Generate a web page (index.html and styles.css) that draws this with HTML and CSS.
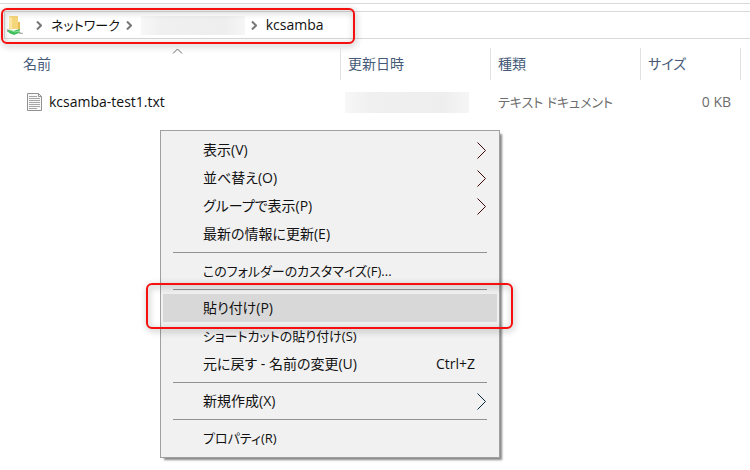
FILE: index.html
```html
<!DOCTYPE html>
<html lang="ja">
<head>
  <meta charset="UTF-8">
  <title>kcsamba</title>
  <link rel="stylesheet" href="styles.css">
</head>
<body>

  <header class="toolbar">
    <nav class="address">
      <svg class="folder" width="16" height="20" viewBox="0 0 16 20">
        <path d="M2 1h9v13H2z" fill="#f6d67a"/>
        <path d="M2 1l3 2v12l-3-2z" fill="#fbe7a6"/>
        <path d="M11 7h2v8h-2z" fill="#e8bd55"/>
        <path d="M0 14l3 1v2H0zM12 17l4 1v1h-4z" fill="#a9b3ac"/>
        <path d="M1 15l5 1 7-2-1 4-5 2-5-2z" fill="#3fbf5a"/>
        <path d="M3 15l5 2 4-1" fill="none" stroke="#8be39a"/>
      </svg>
      <svg class="crumb-arrow" width="6" height="9" viewBox="0 0 6 9"><path d="M1 .5l4 4-4 4"/></svg>
      <a class="crumb kana" href="#">ネットワーク</a>
      <svg class="crumb-arrow" width="6" height="9" viewBox="0 0 6 9"><path d="M1 .5l4 4-4 4"/></svg>
      <span class="blurred blurred-host"></span>
      <svg class="crumb-arrow" width="6" height="9" viewBox="0 0 6 9"><path d="M1 .5l4 4-4 4"/></svg>
      <a class="crumb" href="#">kcsamba</a>
      <span class="marker address-marker"></span>
    </nav>
  </header>

  <table class="files">
    <thead>
      <tr>
        <th class="col-name">名前
          <svg class="sort" width="11" height="6" viewBox="0 0 11 6"><path d="M1 5.500l4.500-4.500 4.500 4.500"/></svg>
        </th>
        <th class="col-date">更新日時</th>
        <th class="col-type">種類</th>
        <th class="col-size">サイズ</th>
        <th class="col-rest"></th>
      </tr>
    </thead>
    <tbody>
      <tr>
        <td>
          <div class="file">
            <svg width="15" height="18" viewBox="0 0 15 18">
              <path d="M.5.5h11l3 3v14H.5z" fill="#f7f7f7" stroke="#929292"/>
              <path d="M11.500.5v3h3" fill="none" stroke="#929292"/>
              <path d="M2 3.500h8M2 5.500h11M2 7.500h11M2 9.500h11M2 11.500h11M2 13.500h11M2 15.500h8" stroke="#a5a5a5"/>
            </svg>
            <span>kcsamba-test1.txt</span>
          </div>
        </td>
        <td class="date"><span class="blurred blurred-date"></span></td>
        <td class="muted kana">テキスト ドキュメント</td>
        <td class="muted size">0 KB</td>
        <td></td>
      </tr>
    </tbody>
  </table>

  <div class="menu">
    <button class="item">表示(V)<svg class="more" width="10" height="17" viewBox="0 0 10 17"><path d="M.5.5l8 8-8 8"/></svg></button>
    <button class="item">並べ替え(O)<svg class="more" width="10" height="17" viewBox="0 0 10 17"><path d="M.5.5l8 8-8 8"/></svg></button>
    <button class="item">グループで表示(P)<svg class="more" width="10" height="17" viewBox="0 0 10 17"><path d="M.5.5l8 8-8 8"/></svg></button>
    <button class="item">最新の情報に更新(E)</button>
    <hr>
    <button class="item kana">このフォルダーのカスタマイズ(F)...</button>
    <hr>
    <button class="item active">貼り付け(P)<span class="marker paste-marker"></span></button>
    <button class="item kana">ショートカットの貼り付け(S)</button>
    <button class="item">元に戻す - 名前の変更(U)<span class="shortcut">Ctrl+Z</span></button>
    <hr>
    <button class="item">新規作成(X)<svg class="more more-new" width="10" height="17" viewBox="0 0 10 17"><path d="M.5.5l8 8-8 8"/></svg></button>
    <hr>
    <button class="item kana">プロパティ(R)</button>
  </div>

</body>
</html>
```
FILE: styles.css
```css
* {
  box-sizing: border-box;
}

body {
  margin: 0;
  background: #fff;
  color: #111;
  font-family: "Open Sans", "Noto Sans CJK JP", sans-serif;
  font-size: 14px;
  line-height: 20px;
  font-feature-settings: "palt";
}

.toolbar {
  margin-top: 3px;
  padding: 7px 0 0 4px;
  border-top: 1px solid #d9d9d9;
}

.address {
  position: relative;
  display: flex;
  align-items: center;
  height: 28px;
  padding-left: 2px;
  border: 1px solid #d9d9d9;
  border-right: none;
}

.folder {
  margin-right: 13px;
}

.crumb-arrow {
  margin-right: 9px;
}

.crumb-arrow path {
  fill: none;
  stroke: #777;
  stroke-width: 2;
}

.crumb {
  margin-right: 6px;
  color: #111;
  text-decoration: none;
  white-space: nowrap;
}

.blurred {
  display: block;
  background: linear-gradient(90deg, #f7f7f7, #f0f0f0 20%, #eee 80%, #f6f6f6);
}

.blurred-host {
  width: 104px;
  height: 19px;
  margin-right: 6px;
}

.blurred-date {
  width: 124px;
  height: 21px;
}

.marker {
  position: absolute;
  border: 2px solid #f50f0f;
  border-radius: 6px;
  filter: drop-shadow(1px 2px 3px rgba(0, 0, 0, 0.4));
  pointer-events: none;
}

.address-marker {
  top: -4px;
  left: -4px;
  width: 354px;
  height: 36px;
}

.files {
  width: 100%;
  margin-top: 9px;
  border-collapse: separate;
  border-spacing: 0;
  table-layout: fixed;
}

.files th {
  position: relative;
  height: 32px;
  padding: 0 0 0 7px;
  border-right: 1px solid #e2e2e2;
  color: #465a78;
  font-weight: normal;
  text-align: left;
}

.files .col-name {
  width: 341px;
  padding-left: 23px;
}

.col-date,
.col-type {
  width: 150px;
}

.col-size {
  width: 100px;
}

.files .col-rest {
  border: none;
}

.sort {
  position: absolute;
  top: 0;
  left: 172px;
}

.sort path {
  fill: none;
  stroke: #666;
}

.files td {
  height: 44px;
  padding: 0 0 0 7px;
}

.files .date {
  padding-left: 4px;
}

.file {
  display: flex;
  align-items: center;
  gap: 7px;
  padding-left: 20px;
}

.files .muted {
  color: #6d6d6d;
}

.files .size {
  padding-right: 10px;
  text-align: right;
}

.menu {
  position: absolute;
  top: 130px;
  left: 160px;
  width: 340px;
  padding: 5px 2px;
  background: #f1f1f1;
  border: 1px solid #a0a0a0;
  box-shadow: 3px 3px 2px -1px #888;
}

.item {
  position: relative;
  display: flex;
  align-items: center;
  width: 100%;
  height: 28px;
  padding: 0 10px 0 40px;
  border: none;
  background: none;
  color: #111;
  font: inherit;
  font-feature-settings: inherit;
  white-space: nowrap;
}

.item.active {
  z-index: 1;
  background: #d8d8d8;
}

/* long katakana labels */
.kana {
  font-size: 13px;
}

.more {
  margin-left: auto;
}

.more path {
  fill: none;
  stroke: #3a0808;
}

.more-new path {
  stroke: #08283f;
}

.shortcut {
  margin-left: auto;
  margin-right: 12px;
}

.menu hr {
  height: 1px;
  margin: 4px 10px;
  border: none;
  background: #919191;
}

.paste-marker {
  top: -11px;
  right: -16px;
  bottom: -7px;
  left: -17px;
}
```
